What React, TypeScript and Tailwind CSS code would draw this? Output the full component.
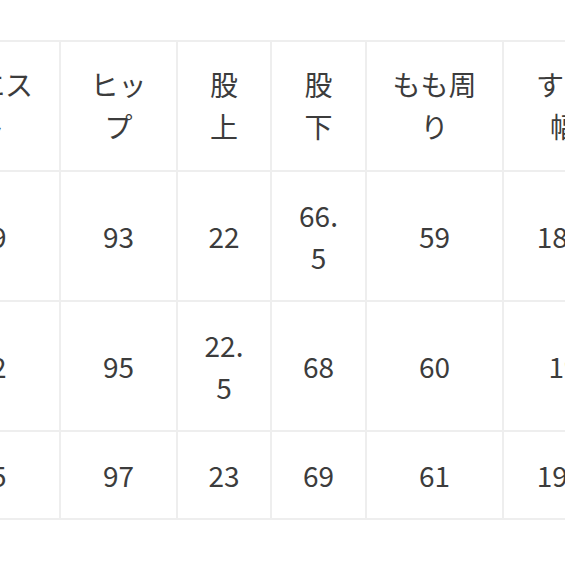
const columns = [
  { label: "ウエスト", w: "w-[138px]" },
  { label: "ヒップ", w: "w-[117px]" },
  { label: "股上", w: "w-[94px]" },
  { label: "股下", w: "w-[95px]" },
  { label: "もも周り", w: "w-[137px]" },
  { label: "すそ幅", w: "w-[122px]" },
];

const rows = [
  ["69", "93", "22", "66.5", "59", "18.5"],
  ["72", "95", "22.5", "68", "60", "19"],
  ["75", "97", "23", "69", "61", "19.5"],
];

export default function App() {
  return (
    <div className="w-[565px] h-[565px] overflow-hidden bg-white pt-[40px]">
      <table
        className="w-[703px] min-w-[703px] ml-[-79px] border-collapse table-fixed text-[28px] leading-[42px] text-[#3c3c3c]"
        style={{ fontFamily: '"Noto Sans CJK JP", "Noto Sans", sans-serif' }}
      >
        <thead>
          <tr>
            {columns.map((c) => (
              <th
                key={c.label}
                className={`${c.w} border-2 border-[#eeeeee] px-[24px] pt-[21px] pb-[23px] font-normal text-center align-middle break-all`}
              >
                {c.label}
              </th>
            ))}
          </tr>
        </thead>
        <tbody>
          {rows.map((r, i) => (
            <tr key={i}>
              {r.map((v, j) => (
                <td
                  key={j}
                  className="border-2 border-[#eeeeee] px-[24px] pt-[22px] pb-[22px] text-center align-middle break-all"
                >
                  {v}
                </td>
              ))}
            </tr>
          ))}
        </tbody>
      </table>
    </div>
  );
}
